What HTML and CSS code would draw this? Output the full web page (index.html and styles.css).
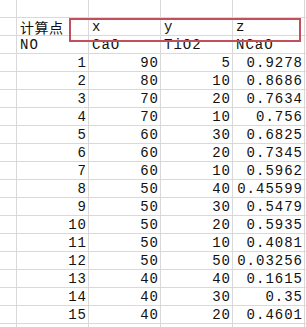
FILE: index.html
```html
<!DOCTYPE html>
<html lang="zh">
<head>
<meta charset="utf-8">
<title>Sheet</title>
<link rel="stylesheet" href="styles.css">
</head>
<body>
<div class="sheet">
  <table class="grid">
    <colgroup>
      <col class="c-a"><col class="c-w"><col class="c-w"><col class="c-w"><col class="c-w"><col class="c-x">
    </colgroup>
    <tbody>
      <tr><td></td><td></td><td></td><td></td><td></td><td></td></tr>
      <tr><td></td><td class="t cjk">计算点</td><td class="t">x</td><td class="t">y</td><td class="t">z</td><td></td></tr>
      <tr><td></td><td class="t">NO</td><td class="t">CaO</td><td class="t">TiO2</td><td class="t">NCaO</td><td></td></tr>
      <tr><td></td><td class="n">1</td><td class="n">90</td><td class="n">5</td><td class="n">0.9278</td><td></td></tr>
      <tr><td></td><td class="n">2</td><td class="n">80</td><td class="n">10</td><td class="n">0.8686</td><td></td></tr>
      <tr><td></td><td class="n">3</td><td class="n">70</td><td class="n">20</td><td class="n">0.7634</td><td></td></tr>
      <tr><td></td><td class="n">4</td><td class="n">70</td><td class="n">10</td><td class="n">0.756</td><td></td></tr>
      <tr><td></td><td class="n">5</td><td class="n">60</td><td class="n">30</td><td class="n">0.6825</td><td></td></tr>
      <tr><td></td><td class="n">6</td><td class="n">60</td><td class="n">20</td><td class="n">0.7345</td><td></td></tr>
      <tr><td></td><td class="n">7</td><td class="n">60</td><td class="n">10</td><td class="n">0.5962</td><td></td></tr>
      <tr><td></td><td class="n">8</td><td class="n">50</td><td class="n">40</td><td class="n">0.45599</td><td></td></tr>
      <tr><td></td><td class="n">9</td><td class="n">50</td><td class="n">30</td><td class="n">0.5479</td><td></td></tr>
      <tr><td></td><td class="n">10</td><td class="n">50</td><td class="n">20</td><td class="n">0.5935</td><td></td></tr>
      <tr><td></td><td class="n">11</td><td class="n">50</td><td class="n">10</td><td class="n">0.4081</td><td></td></tr>
      <tr><td></td><td class="n">12</td><td class="n">50</td><td class="n">50</td><td class="n">0.03256</td><td></td></tr>
      <tr><td></td><td class="n">13</td><td class="n">40</td><td class="n">40</td><td class="n">0.1615</td><td></td></tr>
      <tr><td></td><td class="n">14</td><td class="n">40</td><td class="n">30</td><td class="n">0.35</td><td></td></tr>
      <tr><td></td><td class="n">15</td><td class="n">40</td><td class="n">20</td><td class="n">0.4601</td><td></td></tr>
      <tr><td></td><td></td><td></td><td></td><td></td><td></td></tr>
    </tbody>
  </table>
  <div class="callout"></div>
</div>
</body>
</html>
```

FILE: styles.css
```css
html, body {
  margin: 0;
  padding: 0;
  background: #ffffff;
  overflow: hidden;
}

.sheet {
  position: relative;
  width: 306px;
  height: 327px;
  overflow: hidden;
}

.grid {
  border-collapse: separate;
  border-spacing: 0;
  table-layout: fixed;
  width: 325px;
  font-family: "Liberation Mono", "Noto Sans CJK SC", monospace;
  font-size: 14px;
  letter-spacing: 1px;
  color: #111111;
}

.c-a { width: 17px; }
.c-w { width: 72px; }
.c-x { width: 20px; }

.grid td {
  box-sizing: border-box;
  height: 18px;
  padding: 0 2px 0 3px;
  border-right: 1px solid #d9d9d9;
  border-bottom: 1px solid #d9d9d9;
  white-space: nowrap;
  overflow: hidden;
  line-height: 16px;
  vertical-align: bottom;
}

.grid td.t {
  text-align: left;
}

.grid td.n {
  text-align: right;
  letter-spacing: 1px;
  padding-right: 1px;
}

.grid td.cjk {
  font-family: "Noto Sans CJK SC", sans-serif;
  font-size: 14px;
  letter-spacing: 0.5px;
}

.callout {
  position: absolute;
  left: 69px;
  top: 18px;
  width: 232px;
  height: 24px;
  box-sizing: border-box;
  border: 2px solid #c0505a;
}
```
